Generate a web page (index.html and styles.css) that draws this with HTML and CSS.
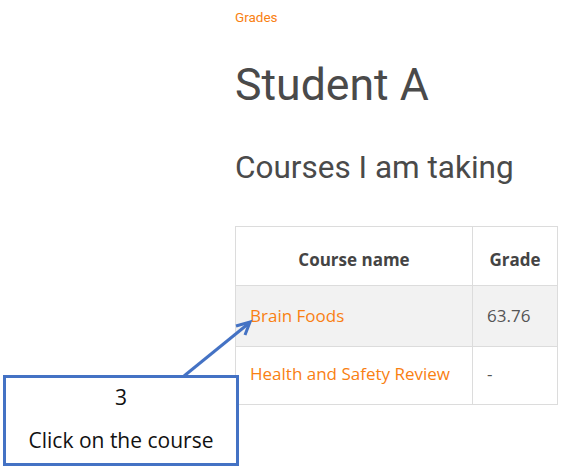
FILE: index.html
```html
<!DOCTYPE html>
<html>
<head>
<meta charset="utf-8">
<link rel="stylesheet" href="styles.css">
</head>
<body>
<div class="page">
  <div class="content">
    <a class="crumb" href="#">Grades</a>
    <h1 class="title">Student A</h1>
    <h2 class="subtitle">Courses I am taking</h2>
    <table class="grades">
      <thead>
        <tr><th class="c1">Course name</th><th class="c2">Grade</th></tr>
      </thead>
      <tbody>
        <tr class="shaded"><td><a href="#">Brain Foods</a></td><td>63.76</td></tr>
        <tr class="last"><td><a href="#">Health and Safety Review</a></td><td>-</td></tr>
      </tbody>
    </table>
  </div>
  <svg class="arrow" width="566" height="468" viewBox="0 0 566 468">
    <line x1="184" y1="376" x2="248" y2="324" stroke="#4472c4" stroke-width="3"/>
    <polyline points="236,326 250,322 245,335" fill="none" stroke="#4472c4" stroke-width="3" stroke-linejoin="miter"/>
  </svg>
  <div class="callout">
    <div class="num">3</div>
    <div class="msg">Click on the course</div>
  </div>
</div>
</body>
</html>
```
FILE: styles.css
```css
html, body { margin: 0; padding: 0; background: #fff; }
.page { position: relative; width: 566px; height: 468px; overflow: hidden; }
.content { padding-left: 235px; padding-top: 9px; font-family: Roboto, sans-serif; color: #4a4a4a; }
.crumb { display: block; color: #f98012; text-decoration: none; font-size: 13.5px; line-height: 16px; }
.title { margin: 33px 0 0; font-weight: 400; font-size: 44.6px; line-height: 54px; color: #4a4a4a; }
.subtitle { margin: 37.5px 0 0; font-weight: 400; font-size: 31.5px; line-height: 36px; color: #4a4a4a; }
.grades { margin-top: 40.7px; border-collapse: collapse; width: 323px; font-family: "Open Sans", sans-serif; font-size: 17px; line-height: 23px; }
.grades th, .grades td { border: 1px solid #dcdcdc; vertical-align: top; }
.grades th { font-weight: 700; padding: 21px 0 14px; text-align: center; color: #444; }
.grades .c1 { width: 236px; }
.grades td { padding: 18px 14px 19px; color: #555; }
.grades .last td { padding: 15px 14px 19px; }
.grades td a { color: #f98012; text-decoration: none; }
.shaded td { background: #f2f2f2; }
.arrow { position: absolute; left: 0; top: 0; }
.callout { position: absolute; left: 3px; top: 375px; width: 230px; height: 85px; border: 3px solid #4472c4; background: #fff; font-family: "Open Sans", sans-serif; font-size: 21px; color: #111; text-align: center; }
.num { margin-top: 5px; line-height: 28px; }
.msg { margin-top: 15px; line-height: 28px; }
```
